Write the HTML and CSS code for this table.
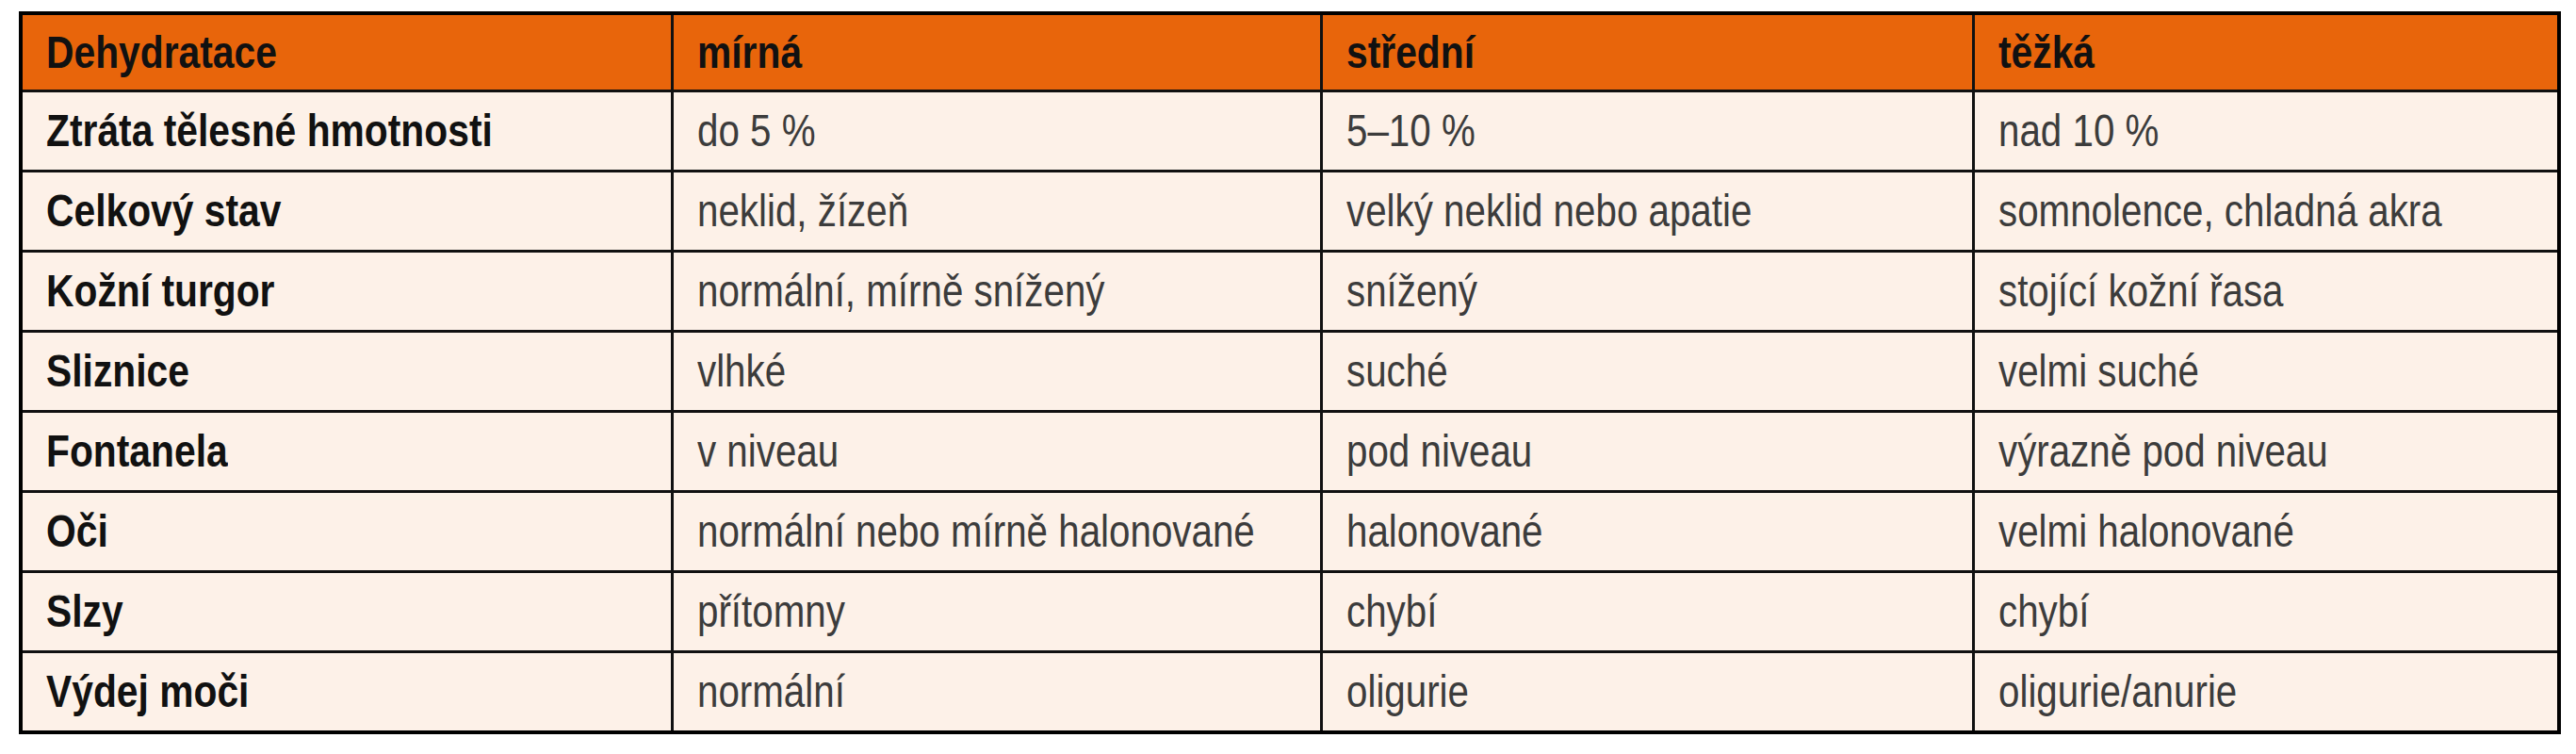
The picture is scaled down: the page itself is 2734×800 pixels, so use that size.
FILE: index.html
```html
<!DOCTYPE html>
<html lang="cs">
<head>
<meta charset="utf-8">
<title>Dehydratace</title>
<link rel="stylesheet" href="styles.css">
</head>
<body>
<table class="dehy">
  <colgroup>
    <col class="c1"><col class="c2"><col class="c3"><col class="c4">
  </colgroup>
  <thead>
    <tr class="head">
      <th><span class="t">Dehydratace</span></th><th><span class="t">mírná</span></th><th><span class="t">střední</span></th><th><span class="t">těžká</span></th>
    </tr>
  </thead>
  <tbody>
    <tr><th><span class="t">Ztráta tělesné hmotnosti</span></th><td><span class="t">do 5 %</span></td><td><span class="t">5–10 %</span></td><td><span class="t">nad 10 %</span></td></tr>
    <tr><th><span class="t">Celkový stav</span></th><td><span class="t">neklid, žízeň</span></td><td><span class="t">velký neklid nebo apatie</span></td><td><span class="t">somnolence, chladná akra</span></td></tr>
    <tr><th><span class="t">Kožní turgor</span></th><td><span class="t">normální, mírně snížený</span></td><td><span class="t">snížený</span></td><td><span class="t">stojící kožní řasa</span></td></tr>
    <tr><th><span class="t">Sliznice</span></th><td><span class="t">vlhké</span></td><td><span class="t">suché</span></td><td><span class="t">velmi suché</span></td></tr>
    <tr><th><span class="t">Fontanela</span></th><td><span class="t">v niveau</span></td><td><span class="t">pod niveau</span></td><td><span class="t">výrazně pod niveau</span></td></tr>
    <tr><th><span class="t">Oči</span></th><td><span class="t">normální nebo mírně halonované</span></td><td><span class="t">halonované</span></td><td><span class="t">velmi halonované</span></td></tr>
    <tr><th><span class="t">Slzy</span></th><td><span class="t">přítomny</span></td><td><span class="t">chybí</span></td><td><span class="t">chybí</span></td></tr>
    <tr><th><span class="t">Výdej moči</span></th><td><span class="t">normální</span></td><td><span class="t">oligurie</span></td><td><span class="t">oligurie/anurie</span></td></tr>
  </tbody>
</table>
</body>
</html>
```

FILE: styles.css
```css
html, body {
  margin: 0;
  padding: 0;
  background: #ffffff;
}
body {
  padding: 12px 0 0 20px;
}
.dehy {
  border-collapse: collapse;
  table-layout: fixed;
  width: 2698px;
  border: 4px solid #000;
  font-family: "Liberation Sans", Arial, sans-serif;
  font-size: 48px;
  line-height: 1;
}
.c1 { width: 691px; }
.c2 { width: 689px; }
.c3 { width: 692px; }
.c4 { width: 622px; }
.dehy th, .dehy td {
  border: 3px solid #111;
  padding: 0 0 0 25px;
  text-align: left;
  vertical-align: middle;
  white-space: nowrap;
  background: #fdf1e8;
  overflow: hidden;
}
.t {
  display: inline-block;
  transform-origin: left center;
}
.dehy th .t {
  transform: scaleX(0.85);
}
.dehy td .t {
  transform: scaleX(0.84);
}
.dehy td {
  font-weight: normal;
  color: #3c3c3c;
}
.dehy tbody th {
  font-weight: bold;
  color: #111;
  height: 82px;
}
.head th {
  background: #e8650b;
  color: #111;
  font-weight: bold;
  height: 79px;
}
```
